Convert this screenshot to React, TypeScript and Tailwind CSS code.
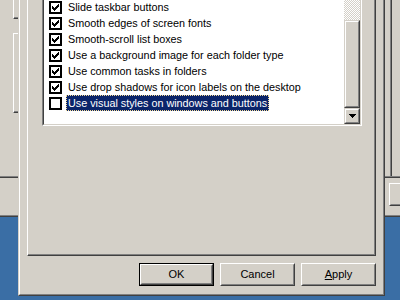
import React from "react";

const items: { label: string; checked: boolean; selected?: boolean }[] = [
  { label: "Animate windows when minimizing and maximizing", checked: true },
  { label: "Fade or slide menus into view", checked: true },
  { label: "Fade or slide ToolTips into view", checked: true },
  { label: "Fade out menu items after clicking", checked: true },
  { label: "Show shadows under menus", checked: true },
  { label: "Show shadows under mouse pointer", checked: true },
  { label: "Show translucent selection rectangle", checked: true },
  { label: "Show window contents while dragging", checked: true },
  { label: "Slide open combo boxes", checked: true },
  { label: "Slide taskbar buttons", checked: true },
  { label: "Smooth edges of screen fonts", checked: true },
  { label: "Smooth-scroll list boxes", checked: true },
  { label: "Use a background image for each folder type", checked: true },
  { label: "Use common tasks in folders", checked: true },
  { label: "Use drop shadows for icon labels on the desktop", checked: true },
  { label: "Use visual styles on windows and buttons", checked: false, selected: true },
];

const checkPixels: [number, number, number][] = [
  [6, 0, 1],
  [5, 1, 2],
  [0, 2, 1],
  [4, 2, 3],
  [0, 3, 2],
  [3, 3, 3],
  [0, 4, 5],
  [1, 5, 3],
  [2, 6, 1],
];

function CheckBox({ checked }: { checked: boolean }) {
  return (
    <div className="w-[13px] h-[13px] border-2 border-black bg-white shrink-0 flex">
      {checked && (
        <svg width="9" height="9" viewBox="0 0 9 9" shapeRendering="crispEdges" className="block">
          {checkPixels.map(([x, y, w], i) => (
            <rect key={i} x={x + 1} y={y + 1} width={w} height={1} fill="#000" />
          ))}
        </svg>
      )}
    </div>
  );
}

function Row({ label, checked, selected }: { label: string; checked: boolean; selected?: boolean }) {
  return (
    <div className="h-[16px] shrink-0 flex items-start pl-[5px]">
      <div className="pt-[2px]">
        <CheckBox checked={checked} />
      </div>
      <div
        className={
          "ml-[4px] h-[16px] px-[1px] border whitespace-nowrap text-[10.8px] leading-[14px] " +
          (selected
            ? "bg-[#0a246a] text-white border-dotted border-[#f5db95]"
            : "text-black border-transparent")
        }
      >
        {label}
      </div>
    </div>
  );
}

function Btn3D({ children, className = "" }: { children?: React.ReactNode; className?: string }) {
  return (
    <div
      className={
        "border border-t-[#d4d0c8] border-l-[#d4d0c8] border-r-[#404040] border-b-[#404040] " + className
      }
    >
      <div className="w-full h-full border border-t-white border-l-white border-r-[#808080] border-b-[#808080] bg-[#d4d0c8]">
        {children}
      </div>
    </div>
  );
}

function PushButton({ label, isDefault, underline }: { label: string; isDefault?: boolean; underline?: number }) {
  const text =
    underline === undefined ? (
      label
    ) : (
      <>
        {label.slice(0, underline)}
        <span className="underline underline-offset-[1px]">{label[underline]}</span>
        {label.slice(underline + 1)}
      </>
    );
  const inner = (
    <div className="w-full h-full border border-t-white border-l-white border-r-[#404040] border-b-[#404040]">
      <div className="w-full h-full border border-t-[#d4d0c8] border-l-[#d4d0c8] border-r-[#808080] border-b-[#808080] bg-[#d4d0c8] flex items-center justify-center text-[11px] text-black">
        {text}
      </div>
    </div>
  );
  return (
    <div className={"w-[75px] h-[23px] " + (isDefault ? "border border-black" : "")}>{inner}</div>
  );
}

export default function App() {
  return (
    <div className="relative w-[400px] h-[300px] overflow-hidden bg-[#3a6ea5] font-['Liberation_Sans',Arial,sans-serif] select-none">
      {/* background dialog window */}
      <div className="absolute left-[-100px] top-[-60px] w-[600px] border-b border-b-[#404040]">
        <div className="border-b border-b-[#808080] bg-[#d4d0c8] flex flex-col h-[276px]">
          {/* panel */}
          <div className="h-[238px] border-b border-b-[#404040] shrink-0">
            <div className="h-full border-b border-b-[#808080] flex">
              <div className="ml-[113px] flex flex-col">
                <div className="h-[79px] w-[60px] border-l border-l-white border-b border-b-[#404040]">
                  <div className="h-full border-b border-b-[#808080]" />
                </div>
                <div className="mt-[14px] h-[80px] w-[60px] border-l border-t border-l-white border-t-white border-b border-b-[#404040]">
                  <div className="h-full border-b border-b-[#808080]" />
                </div>
              </div>
              <div className="flex-1" />
              <div className="w-[2px] mr-[108px] border-l border-l-[#808080] border-r border-r-[#404040]" />
            </div>
          </div>
          {/* button row */}
          <div className="mt-[5px] flex">
            <div className="ml-[489px] w-[75px] h-[23px] border border-t-white border-l-white border-r-[#404040] border-b-[#404040]">
              <div className="w-full h-full border border-t-[#d4d0c8] border-l-[#d4d0c8] border-r-[#808080] border-b-[#808080]" />
            </div>
          </div>
        </div>
      </div>

      {/* foreground dialog */}
      <div className="absolute left-[18px] top-[-60px] w-[367px] border-l border-r border-b border-l-[#d4d0c8] border-r-[#404040] border-b-[#404040]">
        <div className="border-l border-r border-b border-l-white border-r-[#808080] border-b-[#808080] bg-[#d4d0c8] flex flex-col">
          {/* tab page */}
          <div className="mx-[7px] h-[316px] border-l border-r border-b border-l-white border-r-[#404040] border-b-[#404040]">
            <div className="h-full border-r border-b border-r-[#808080] border-b-[#808080] flex flex-col">
              {/* list box */}
              <div className="mt-[10px] ml-[14px] w-[320px] h-[176px] border border-t-[#808080] border-l-[#808080] border-r-white border-b-white">
                <div className="h-full border border-t-[#404040] border-l-[#404040] border-r-[#d4d0c8] border-b-[#d4d0c8] bg-white flex">
                  <div className="flex-1 flex flex-col justify-end pb-[13px] overflow-hidden">
                    {items.map((it) => (
                      <Row key={it.label} {...it} />
                    ))}
                  </div>
                  {/* scrollbar */}
                  <div className="w-[16px] flex flex-col">
                    <div className="flex-1 bg-[repeating-conic-gradient(#d4d0c8_0%_25%,#ffffff_0%_50%)] bg-[length:2px_2px]" />
                    <Btn3D className="h-[88px] shrink-0" />
                    <Btn3D className="h-[16px] shrink-0">
                      <div className="w-full h-full flex items-center justify-center">
                        <svg width="7" height="4" viewBox="0 0 7 4" shapeRendering="crispEdges" className="block">
                          <rect x="0" y="0" width="7" height="1" fill="#000" />
                          <rect x="1" y="1" width="5" height="1" fill="#000" />
                          <rect x="2" y="2" width="3" height="1" fill="#000" />
                          <rect x="3" y="3" width="1" height="1" fill="#000" />
                        </svg>
                      </div>
                    </Btn3D>
                  </div>
                </div>
              </div>
            </div>
          </div>
          {/* buttons */}
          <div className="mt-[7px] mb-[8px] pr-[7px] flex justify-end gap-[6px]">
            <PushButton label="OK" isDefault />
            <PushButton label="Cancel" />
            <PushButton label="Apply" underline={0} />
          </div>
        </div>
      </div>
    </div>
  );
}
